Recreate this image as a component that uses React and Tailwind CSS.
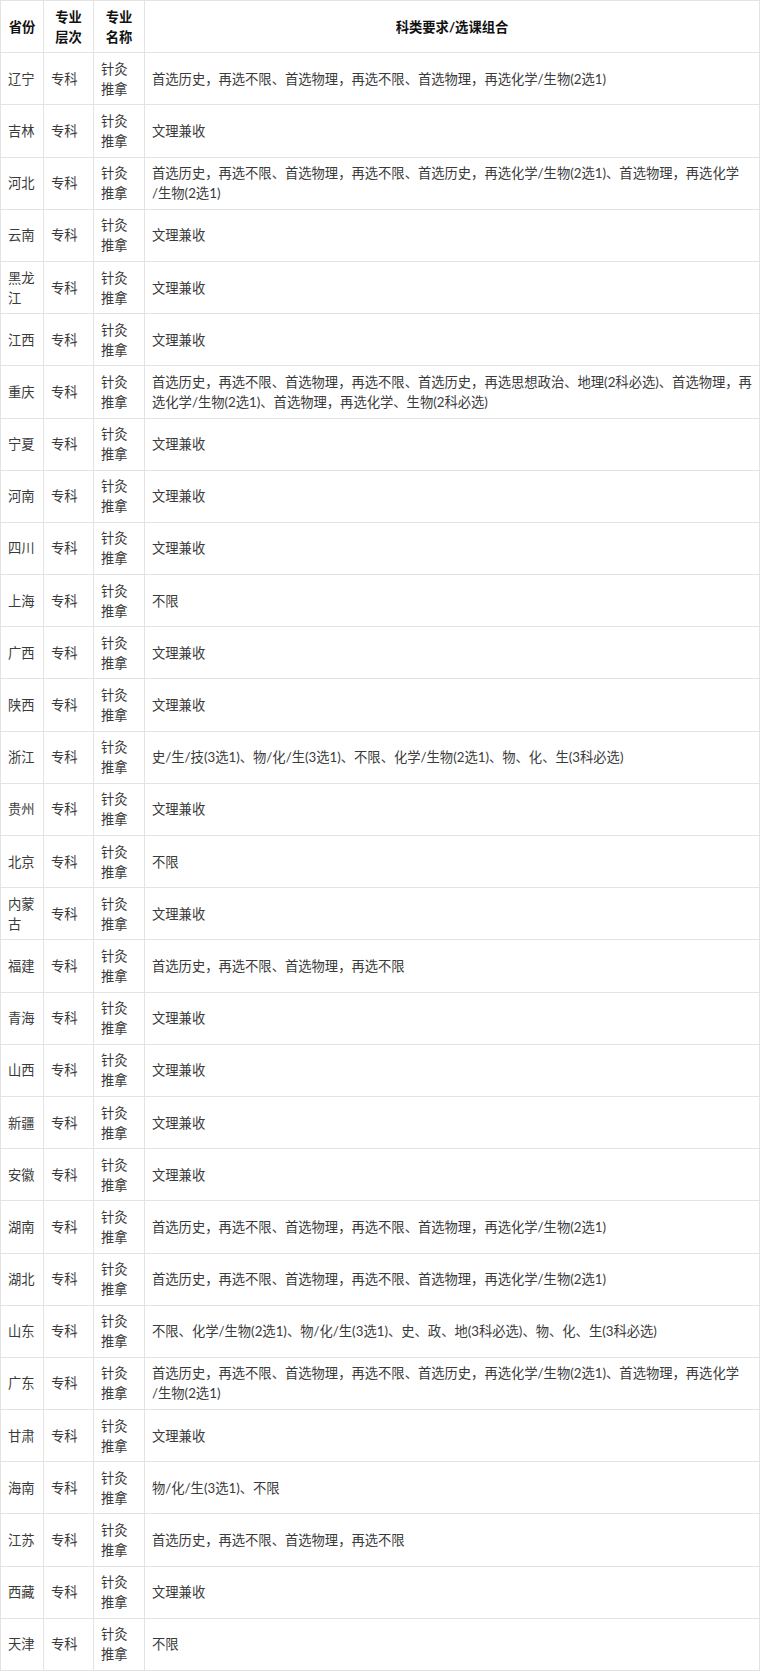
const ROWS = [
  ['辽宁', '首选历史，再选不限、首选物理，再选不限、首选物理，再选化学/生物(2选1)'],
  ['吉林', '文理兼收'],
  ['河北', '首选历史，再选不限、首选物理，再选不限、首选历史，再选化学/生物(2选1)、首选物理，再选化学/生物(2选1)'],
  ['云南', '文理兼收'],
  ['黑龙江', '文理兼收'],
  ['江西', '文理兼收'],
  ['重庆', '首选历史，再选不限、首选物理，再选不限、首选历史，再选思想政治、地理(2科必选)、首选物理，再选化学/生物(2选1)、首选物理，再选化学、生物(2科必选)'],
  ['宁夏', '文理兼收'],
  ['河南', '文理兼收'],
  ['四川', '文理兼收'],
  ['上海', '不限'],
  ['广西', '文理兼收'],
  ['陕西', '文理兼收'],
  ['浙江', '史/生/技(3选1)、物/化/生(3选1)、不限、化学/生物(2选1)、物、化、生(3科必选)'],
  ['贵州', '文理兼收'],
  ['北京', '不限'],
  ['内蒙古', '文理兼收'],
  ['福建', '首选历史，再选不限、首选物理，再选不限'],
  ['青海', '文理兼收'],
  ['山西', '文理兼收'],
  ['新疆', '文理兼收'],
  ['安徽', '文理兼收'],
  ['湖南', '首选历史，再选不限、首选物理，再选不限、首选物理，再选化学/生物(2选1)'],
  ['湖北', '首选历史，再选不限、首选物理，再选不限、首选物理，再选化学/生物(2选1)'],
  ['山东', '不限、化学/生物(2选1)、物/化/生(3选1)、史、政、地(3科必选)、物、化、生(3科必选)'],
  ['广东', '首选历史，再选不限、首选物理，再选不限、首选历史，再选化学/生物(2选1)、首选物理，再选化学/生物(2选1)'],
  ['甘肃', '文理兼收'],
  ['海南', '物/化/生(3选1)、不限'],
  ['江苏', '首选历史，再选不限、首选物理，再选不限'],
  ['西藏', '文理兼收'],
  ['天津', '不限'],
]

// the source wraps before a slash, not after it
const slashBreak = (s) => s.replace(/\//g, '\u200B/\u2060')

const cell = 'border border-[#e3e3e3] px-[7px] py-[5.6px] align-middle'

export default function App() {
  return (
    <div
      className="w-[760px] bg-white text-[13.3px] leading-[20px] text-[#3a3a3a]"
      style={{ fontFamily: 'Lato, "Noto Sans CJK SC", sans-serif' }}
    >
      <table className="w-[760px] table-fixed border-collapse">
        <colgroup>
          <col className="w-[43px]" />
          <col className="w-[50px]" />
          <col className="w-[51px]" />
          <col />
        </colgroup>
        <thead>
          <tr className="font-bold text-[#111]">
            <th className={cell + ' text-center'}>省份</th>
            <th className={cell + ' text-center'}>专业<br />层次</th>
            <th className={cell + ' text-center'}>专业<br />名称</th>
            <th className={cell + ' text-center'}>科类要求/选课组合</th>
          </tr>
        </thead>
        <tbody>
          {ROWS.map(([prov, req]) => (
            <tr key={prov}>
              <td className={cell}>{prov}</td>
              <td className={cell}>专科</td>
              <td className={cell}>针灸<br />推拿</td>
              <td className={cell}>{slashBreak(req)}</td>
            </tr>
          ))}
        </tbody>
      </table>
    </div>
  )
}
